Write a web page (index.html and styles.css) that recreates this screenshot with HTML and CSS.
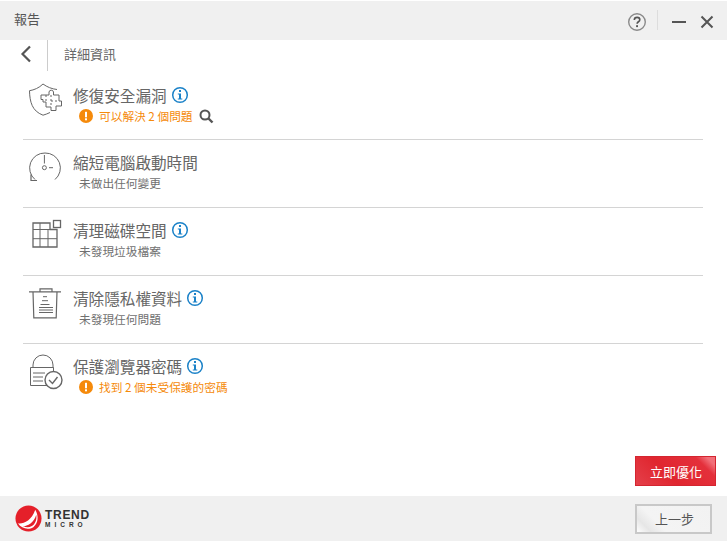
FILE: index.html
```html
<!DOCTYPE html>
<html lang="zh-Hant">
<head>
    <meta charset="UTF-8">
    <title>報告</title>
    <link rel="stylesheet" href="styles.css">
</head>
<body>
<div class="win">
    <div class="titlebar">
        <span class="title">報告</span>
        <svg class="ic-help" width="20" height="20" viewBox="0 0 20 20"><circle cx="10" cy="10" r="8.3" fill="none" stroke="#8a8a8a" stroke-width="1.4"/><path d="M7.3 8c0-1.7 1.2-2.6 2.8-2.6s2.7.9 2.700 2.300c0 2-2.700 2.100-2.700 4" fill="none" stroke="#555" stroke-width="1.6"/><rect x="9.1" y="13.2" width="1.9" height="1.9" fill="#555"/></svg>
        <span class="tb-sep"></span>
        <svg class="ic-min" width="14" height="14" viewBox="0 0 14 14"><rect x="0" y="6" width="14" height="2" fill="#555"/></svg>
        <svg class="ic-close" width="14" height="14" viewBox="0 0 14 14"><path d="M1.500 1.500l11 11M12.500 1.500l-11 11" stroke="#555" stroke-width="2" fill="none"/></svg>
    </div>
    <div class="subbar">
        <a class="back"><svg width="12" height="18" viewBox="0 0 12 18"><path d="M10 1.500L2.500 9l7.500 7.500" fill="none" stroke="#555" stroke-width="2.200"/></svg></a>
        <span class="subtitle">詳細資訊</span>
    </div>
    <ul class="list">
        <li class="row">
            <svg class="ic ic-up" width="40" height="40" viewBox="0 0 40 40" fill="none" stroke="#666" stroke-width="1"><path d="M24 32.500c-2 1-4.500 2-7 2.700C6 31 3.800 22 3.500 10.700 8 10 13 8 17 4c4 3 9 5 14 5.500"/><path d="M20 15h3v-3a2.300 2.300 0 0 1 4.500 0v3H33v6h2.500v5H30v4.500h-5V27h-5v-5h-3v-2.500h-2V15z" fill="#fff"/><path d="M20 15v7M25 15v12M25 21h8" stroke-dasharray="2 2"/></svg>
            <div class="txt">
                <div class="name">修復安全漏洞<svg class="info" width="18" height="18" viewBox="0 0 18 18"><use href="#i"/></svg></div>
                <div class="st warn"><svg class="warn-ic" width="14" height="14" viewBox="0 0 14 14"><use href="#w"/></svg>可以解決 2 個問題<svg class="mag" width="15" height="15" viewBox="0 0 15 15"><circle cx="6" cy="6" r="4.500" fill="none" stroke="#555" stroke-width="2"/><path d="M9.500 9.500l4 4" stroke="#555" stroke-width="2.400"/></svg></div>
            </div>
        </li>
        <li class="row">
            <svg class="ic" width="40" height="40" viewBox="0 0 40 40" fill="none" stroke="#666" stroke-width="1"><path d="M29 27.500A15 15 0 0 0 19 1 15 15 0 0 0 9 27.500"/><path d="M5 22.500v6h6" stroke-width="1.200"/><path d="M18.400 3v8.500M23 15.700h4"/><circle cx="18.400" cy="15.700" r="2"/></svg>
            <div class="txt">
                <div class="name">縮短電腦啟動時間</div>
                <div class="st">未做出任何變更</div>
            </div>
        </li>
        <li class="row">
            <svg class="ic" width="40" height="40" viewBox="0 0 40 40" fill="none" stroke="#666" stroke-width="1"><path d="M24 3H7v24h24V9.500h-7z" stroke-width="1.300"/><path d="M7 9.500h17M7 18.700h24M14 3v24M22 9.500V27"/><rect x="27.500" y="0.500" width="7" height="7" stroke-width="1.300"/></svg>
            <div class="txt">
                <div class="name">清理磁碟空間<svg class="info" width="18" height="18" viewBox="0 0 18 18"><use href="#i"/></svg></div>
                <div class="st">未發現垃圾檔案</div>
            </div>
        </li>
        <li class="row">
            <svg class="ic" width="40" height="40" viewBox="0 0 40 40" fill="none" stroke="#666" stroke-width="1"><path d="M3 3.800h32M7 3.800l.8 26h22.400l.8-26M14 3.800V.800h12v3" stroke-width="1.200"/><path d="M17 8.700h4M16 12.700h6M14.500 16.500h9M13 19.500h14M13 22h14M13 24.500h14"/></svg>
            <div class="txt">
                <div class="name">清除隱私權資料<svg class="info" width="18" height="18" viewBox="0 0 18 18"><use href="#i"/></svg></div>
                <div class="st">未發現任何問題</div>
            </div>
        </li>
        <li class="row">
            <svg class="ic" width="40" height="40" viewBox="0 0 40 40" fill="none" stroke="#666" stroke-width="1"><path d="M7 12V9a10 10 0 0 1 20 0v3"/><path d="M4.500 11.500h23v18h-23z"/><path d="M7 17h12M7 21h10M7 25h10"/><circle cx="27.500" cy="24" r="8.500" fill="#fff" stroke-width="1.400"/><path d="M23 24l3.500 3.500 5-6.500" stroke-width="1.400"/></svg>
            <div class="txt">
                <div class="name">保護瀏覽器密碼<svg class="info" width="18" height="18" viewBox="0 0 18 18"><use href="#i"/></svg></div>
                <div class="st warn"><svg class="warn-ic" width="14" height="14" viewBox="0 0 14 14"><use href="#w"/></svg>找到 2 個未受保護的密碼</div>
            </div>
        </li>
    </ul>
    <div class="actions"><a class="btn-red">立即優化</a></div>
    <div class="footer">
        <div class="logo">
            <svg width="27" height="27" viewBox="0 0 28 28"><circle cx="14" cy="14" r="13.500" fill="#e5202a"/><path d="M3 19C8 20 17 17 21 5c4 7 3 14-2 18-5 3-12 2-16-4z" fill="#fff"/><path d="M8 22c5 0 12-4 14-12 1 5-1 10-5 12-3 2-6 1-9 0z" fill="#e5202a"/></svg>
            <div class="logo-txt"><div class="l1">TREND</div><div class="l2">MICRO</div></div>
        </div>
        <a class="btn-gray">上一步</a>
    </div>
</div>
<svg width="0" height="0" class="defs">
    <symbol id="i" viewBox="0 0 18 18"><circle cx="9" cy="9" r="7.300" fill="#fff" stroke="#1b82c8" stroke-width="1.500"/><rect x="8" y="4" width="2" height="2" fill="#1b82c8"/><path d="M6.800 7.500H10v5h1.300v1H6.800v-1H8v-4H6.800z" fill="#1b82c8"/></symbol>
    <symbol id="w" viewBox="0 0 14 14"><circle cx="7" cy="7" r="7" fill="#f58a0b"/><rect x="6" y="2.800" width="2" height="5.500" fill="#fff"/><rect x="6" y="9.300" width="2" height="2" fill="#fff"/></symbol>
</svg>
</body>
</html>
```
FILE: styles.css
```css
* {margin:0; padding:0; list-style:none; box-sizing:border-box;}

body {width:728px; height:543px; background:#fff; overflow:hidden; font-family:"Noto Sans CJK TC","Liberation Sans",sans-serif; color:#555;}

.win {width:727px; height:541px; display:flex; flex-direction:column; background:#fff;}

.titlebar {height:39px; margin-top:1px; background:#f0f0f0; display:flex; align-items:center; padding:3px 0 0 14px; flex:none;}
.title {font-size:13px; color:#555; flex:1; margin-top:-7px;}
.ic-help {margin-right:10px;}
.tb-sep {width:1px; height:20px; background:#ddd; margin:-4px 14px 0 0;}
.ic-min {margin-right:14px;}
.ic-close {margin-right:13px;}

.subbar {height:31px; display:flex; align-items:center; flex:none;}
.back {width:48px; height:31px; display:flex; align-items:center; padding:0 0 3px 20px; border-right:1px solid #ccc;}
.subtitle {font-size:13px; color:#666; margin:-5px 0 0 16px;}

.list {padding:0 24px 0 23px; flex:none;}
.row {height:68px; display:flex; align-items:flex-start; padding-top:12px; border-bottom:1px solid #d4d4d4;}
.row:first-child {height:69px; padding-top:14px;}
.row:last-child {border-bottom:none;}
.ic {flex:none; margin:0 7px 0 3px; overflow:visible;}
.ic-up {margin-top:-5px;}
.name {font-size:15.600px; line-height:20px; color:#666; display:flex; align-items:center; height:20px;}
.info {margin-left:4px;}
.st {font-size:11.700px; line-height:16px; color:#707070; margin:3px 0 0 6px; display:flex; align-items:center;}
.warn {color:#f58a0b;}
.warn-ic {margin-right:6px;}
.mag {margin-left:6px;}

.actions {flex:1; display:flex; justify-content:flex-end; align-items:flex-end; padding:0 11px 10px 0;}
.btn-red {width:81px; height:30px; padding-left:1px; background:linear-gradient(225deg,#f2707a 0,#f2707a 6px,#e4303b 14px,#e0262f 60%,#e4404a 100%); color:#fff; font-size:13px; display:flex; align-items:center; justify-content:center; border:1px solid #d42530;}

.footer {height:45px; background:#f0f0f0; flex:none; display:flex; align-items:center; justify-content:space-between; padding:0 15px 0 15px;}
.logo {display:flex; align-items:center; gap:3px;}
.logo-txt {font-family:"Liberation Sans",sans-serif; color:#333; font-weight:bold; margin-top:2px;}
.l1 {font-size:12px; line-height:11px; letter-spacing:.7px;}
.l2 {font-size:6.500px; line-height:8px; letter-spacing:4px;}
.btn-gray {width:77px; height:30px; padding-left:2px; background:linear-gradient(45deg,#fdfdfd 0,#e6e6e6 10px,#f4f4f4 30%,#f2f2f2 100%); border:2px solid #c8c8c8; font-size:13px; color:#555; display:flex; align-items:center; justify-content:center;}

.defs {position:absolute;}
```
